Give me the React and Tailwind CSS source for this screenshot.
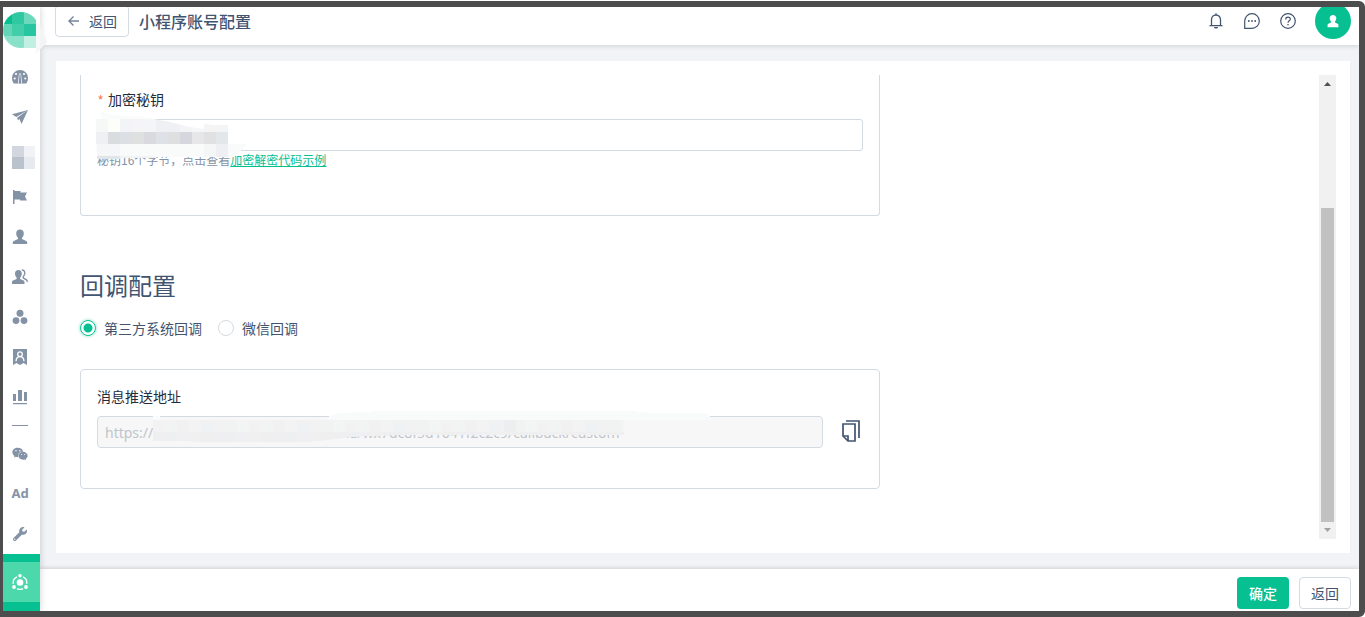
import { useState } from 'react';
import { FaWeixin, FaWrench } from 'react-icons/fa';

function Svg({ children, className = 'size-4', viewBox = '0 0 16 16' }) {
  return (
    <svg className={className} viewBox={viewBox} fill="currentColor" aria-hidden="true">
      {children}
    </svg>
  );
}

const person = 'M8 0.5c2.300 0 3.800 1.600 3.800 3.800 0 2.100-.7 3.500-1.800 4.500v1.300l4.200 1.800c.8.400 1 1 1 1.800v1.300H.8v-1.300c0-.8.2-1.400 1-1.800L6 10.100V8.800C4.900 7.800 4.200 6.400 4.200 4.300 4.200 2.100 5.700.5 8 .5z';

const navItems = [
  {
    label: '仪表盘',
    icon: (
      <Svg>
        <path d="M0 9a8 8 0 0 1 16 0c0 2.200-.6 4-1.700 5.500H1.700A8.500 8.500 0 0 1 0 9z" />
        <g fill="#fff">
          <path d="M7 4.500h2l.8 7.500v2.500H6.200V12z" />
          <circle cx="4" cy="5" r="1.100" />
          <circle cx="12" cy="5" r="1.100" />
          <circle cx="2.700" cy="9.500" r="1.100" />
          <circle cx="13.300" cy="9.500" r="1.100" />
        </g>
        <path d="M7.500 5h1l.6 7.500v2H6.900v-2z" />
      </Svg>
    ),
  },
  {
    label: '推送',
    icon: (
      <Svg>
        <path d="M16 1 0 5.200l4.300 2.900zM16 1 5.200 8.800l.6 2.500 1.700-1.200 2 5z" />
      </Svg>
    ),
  },
  {
    label: '应用',
    icon: (
      <svg className="ml-1.5 h-[23px] w-[23px]" viewBox="0 0 23 23" shapeRendering="crispEdges" aria-hidden="true">
        <rect width="12" height="11" fill="#d2d7df" />
        <rect x="12" width="11" height="11" fill="#f1f2f5" />
        <rect y="11" width="12" height="12" fill="#bac2cd" />
        <rect x="12" y="11" width="11" height="12" fill="#e7eaee" />
      </svg>
    ),
  },
  {
    label: '活动',
    icon: (
      <Svg>
        <path d="M1 1h1.500v1H8.500v1.500H15L13 7.500l2 4H8V10.500H2.500V15H1z" />
      </Svg>
    ),
  },
  { label: '用户', icon: <Svg><path d={person} /></Svg> },
  {
    label: '用户组',
    icon: (
      <Svg>
        <path d="M6.400 1c2.100 0 3.400 1.500 3.400 3.500 0 1.800-.6 3-1.600 4V10l3.300 1.600c.8.400 1 1 1 1.700V15H0v-1.700c0-.7.2-1.300 1-1.700L4.600 10V8.500C3.600 7.500 3 6.300 3 4.500 3 2.500 4.300 1 6.400 1z" />
        <path d="M9.800.9c2.100.2 3.100 1.600 3 3.400-.1 1.600-.7 2.500-1.600 3.500v1l3.200 2 1.300 2" fill="none" stroke="currentColor" strokeWidth="1.400" />
      </Svg>
    ),
  },
  {
    label: '分组',
    icon: (
      <Svg>
        <circle cx="8" cy="4.300" r="3.500" />
        <circle cx="4" cy="11.600" r="3.400" />
        <circle cx="12" cy="11.600" r="3.400" />
      </Svg>
    ),
  },
  {
    label: '会员',
    icon: (
      <Svg>
        <path d="M1 0h14v16l-3.500-2L8 16l-3.500-2L1 16z" />
        <g fill="none" stroke="#fff" strokeWidth="1.300">
          <circle cx="8" cy="5.200" r="2.300" />
          <path d="M4 12.200c.2-3 1.700-4.500 4-4.500s3.800 1.500 4 4.500" />
        </g>
      </Svg>
    ),
  },
  {
    label: '统计',
    icon: (
      <Svg>
        <path d="M1 5h3v7H1zM6 1h4v11H6zM12 3h3v9h-3zM1 14h14v1.200H1z" />
      </Svg>
    ),
  },
];

const toolItems = [
  { label: '微信', icon: <FaWeixin className="size-4" /> },
  { label: 'Ad', icon: <span className="font-['Noto_Sans'] text-[13px] font-bold">Ad</span> },
  { label: '工具', icon: <FaWrench className="size-[14px]" /> },
];

function Logo() {
  return (
    <svg className="relative z-20 h-[50px] w-[45px] shrink-0" viewBox="3 7 45 50" shapeRendering="crispEdges" aria-hidden="true">
      <defs>
        <clipPath id="logo-round">
          <circle cx="21" cy="30" r="18" />
        </clipPath>
      </defs>
      <path d="M36 22l4 3 7 17-11 11z" fill="#f3f4f5" />
      <path d="M36 22l4 3v24l-4 3z" fill="#f7f8f8" />
      <g clipPath="url(#logo-round)">
        <rect x="0" y="12" width="12" height="12" fill="#08bf90" />
        <rect x="12" y="12" width="12" height="12" fill="#30c8a0" />
        <rect x="24" y="12" width="12" height="12" fill="#6cd9bd" />
        <rect x="0" y="24" width="12" height="12" fill="#62d6b7" />
        <rect x="12" y="24" width="12" height="12" fill="#41cea9" />
        <rect x="24" y="24" width="12" height="12" fill="#27c6a0" />
        <rect x="0" y="36" width="24" height="12" fill="#8ae1ca" />
      </g>
      <rect x="24" y="36" width="12" height="12" fill="#c1efe2" />
    </svg>
  );
}

function Sidebar() {
  return (
    <aside className="relative z-20 flex w-[37px] shrink-0 flex-col bg-white text-[#8492a6] shadow-[1px_0_6px_rgba(0,0,0,0.15)]">
      <Logo />
      <nav className="flex flex-1 flex-col">
        {navItems.map((item) => (
          <a key={item.label} href="#" aria-label={item.label} className="flex h-10 items-center justify-center pr-[3px]">
            {item.icon}
          </a>
        ))}
        <div className="flex h-[17px] items-center justify-center pr-[3px]">
          <span className="h-px w-4 bg-[#8492a6]" />
        </div>
        {toolItems.map((item) => (
          <a key={item.label} href="#" aria-label={item.label} className="flex h-10 items-center justify-center pr-[3px]">
            {item.icon}
          </a>
        ))}
        <a href="#" aria-label="设置" className="flex-1 bg-[#07c091] pt-2 text-white">
          <span className="flex h-10 items-center justify-center bg-[#4dd8ab] pr-[3px]">
            <Svg>
              <circle cx="8" cy="8.500" r="3.300" />
              <circle cx="8" cy="1.800" r="1.800" />
              <circle cx="2" cy="13" r="1.900" />
              <circle cx="14" cy="13" r="1.900" />
              <path d="M5 2.900A6.600 6.600 0 0 0 1.300 9.800M11 2.900a6.600 6.600 0 0 1 3.700 6.900M5 14.700a7 7 0 0 0 6 0" fill="none" stroke="currentColor" strokeWidth="1.300" />
            </Svg>
          </span>
        </a>
      </nav>
    </aside>
  );
}

function Header() {
  return (
    <header className="relative z-10 flex h-[38px] shrink-0 items-center overflow-hidden bg-white pr-2 pb-[10px] pl-[15px] text-[#425470] shadow-[0_1px_5px_rgba(0,0,0,0.15)]">
      <button type="button" className="flex h-8 shrink-0 items-center gap-2 rounded border border-[#d3dae2] px-[11px] text-sm">
        <svg className="h-3.5 w-3.5" viewBox="0 0 14 14" fill="none" stroke="#75849a" strokeWidth="1.400" aria-hidden="true">
          <path d="M12 7H2M6.500 2.500 2 7l4.500 4.500" />
        </svg>
        返回
      </button>
      <h1 className="ml-2.5 flex-1 text-base font-medium">小程序账号配置</h1>
      <div className="flex items-center gap-5">
        <button type="button" aria-label="通知">
          <Svg>
            <path d="M3.500 12.200V6.500a4.500 4.500 0 0 1 9 0v5.700M1.500 12.700h13M8 .3v1.700" fill="none" stroke="currentColor" strokeWidth="1.300" />
            <path d="M5.900 14h4.200c-.3 1.100-1 1.600-2.100 1.600S6.200 15.100 5.900 14z" />
          </Svg>
        </button>
        <button type="button" aria-label="消息">
          <Svg>
            <path d="M.7 15.300V8A7.300 7.300 0 1 1 8 15.300z" fill="none" stroke="currentColor" strokeWidth="1.200" />
            <circle cx="4.800" cy="8" r=".9" />
            <circle cx="8" cy="8" r=".9" />
            <circle cx="11.200" cy="8" r=".9" />
          </Svg>
        </button>
        <button type="button" aria-label="帮助">
          <Svg>
            <circle cx="8" cy="8" r="7.300" fill="none" stroke="currentColor" strokeWidth="1.200" />
            <path d="M5.700 6.400c0-1.400.9-2.200 2.300-2.200s2.300.8 2.300 2c0 1.600-2.300 1.700-2.300 3.600" fill="none" stroke="currentColor" strokeWidth="1.200" />
            <circle cx="8" cy="11.700" r=".8" />
          </Svg>
        </button>
        <button type="button" aria-label="账户" className="-ml-[1px] flex size-9 shrink-0 items-center justify-center rounded-full bg-[#07c091] text-white">
          <Svg className="size-3.5">
            <path d="M8 1c2.200 0 3.800 1.500 3.800 3.700 0 1.700-.7 3-1.500 3.900v1.200l3 1.300c.7.400.9.900.9 1.600V15H1.800v-2.300c0-.7.2-1.200.9-1.600l3-1.300V8.600c-.8-.9-1.500-2.200-1.500-3.900C4.200 2.500 5.800 1 8 1z" />
          </Svg>
        </button>
      </div>
    </header>
  );
}

const keyRowA = ['#f6f7f7', '#fdfdfa', '#f3f4f7', '#f5f5f7', '#f4f5f6', '#eff0f4', '#eff0f3', '#f3f4f6', '#f5f6f7', '#f4f4f5', '#f3f4f5'];
const keyRowB = ['#eff0f2', '#d9dde0', '#dce0e4', '#dfe1e0', '#dad9df', '#dee1e8', '#dddfe0', '#d4d8de', '#e7e6e8', '#e0e1e3', '#e4e7e9'];

function KeyMosaic() {
  return (
    <svg className="pointer-events-none absolute -top-2 -left-px h-12 w-[152px]" viewBox="96 111 152 48" shapeRendering="crispEdges" aria-hidden="true">
      <defs>
        <clipPath id="key-top">
          <path d="M96 119h58l16 3 20 5 14 2v-5l9 1h15v8H96z" />
        </clipPath>
      </defs>
      <path d="M101 111l11 4 35 2 7 2v3H96v-3h5z" fill="#fafbfb" />
      <g clipPath="url(#key-top)">
        {keyRowA.map((c, i) => (
          <rect key={i} x={96 + i * 12} y="119" width="12" height="13" fill={c} />
        ))}
      </g>
      {keyRowB.map((c, i) => (
        <rect key={i} x={96 + i * 12} y="132" width="12" height="12" fill={c} />
      ))}
      <path d="M96 144h152l-14 13H97z" fill="#f9fbfb" />
      <rect x="97" y="144" width="23" height="13" fill="#f5f6f7" />
      <rect x="204" y="144" width="12" height="13" fill="#f5f6f7" />
      <rect x="216" y="144" width="12" height="13" fill="#eeeff2" />
      <rect x="97" y="156" width="23" height="3" fill="#e1e4e8" />
      <rect x="120" y="156" width="35" height="2" fill="#f0f2f4" />
    </svg>
  );
}

const urlTones = ['#f2f2f3', '#f3f3f3', '#f1f2f2', '#f2f3f3', '#f0f1f2', '#f3f4f4', '#f1f1f2', '#f2f2f2'];
const urlLowTones = ['#efeff1', '#f0f0f1', '#eeeff1', '#efeff0', '#f0f0f2'];

function UrlMosaic() {
  return (
    <svg className="pointer-events-none absolute -top-1.5 left-14 h-9 w-[558px]" viewBox="153 410 558 36" shapeRendering="crispEdges" aria-hidden="true">
      <defs>
        <clipPath id="url-shape">
          <path d="M153 420h471v15H400l-25 1-23 1-17 2-17 2-8 1H199l-12-1h-34z" />
        </clipPath>
      </defs>
      <path d="M153 416h7v4h-7z" fill="#fafbfb" />
      <path d="M327 417l12-4 45-2h248l20 2h52l6 3v4H327z" fill="#f9fbfa" />
      <g clipPath="url(#url-shape)">
        {Array.from({ length: 40 }, (_, i) => (
          <g key={i}>
            <rect x={153 + i * 12} y="420" width="12" height="12" fill={urlTones[(i * 3) % 8]} />
            <rect x={153 + i * 12} y="432" width="12" height="12" fill={urlLowTones[(i * 2) % 5]} />
          </g>
        ))}
        <rect x="504" y="420" width="12" height="12" fill="#edeef0" />
      </g>
    </svg>
  );
}

function Radio({ label, value, current, onChange }) {
  return (
    <label className="flex items-center gap-2">
      <input
        type="radio"
        name="callback"
        value={value}
        checked={current === value}
        onChange={() => onChange(value)}
        className="size-4 appearance-none rounded-full border border-[#d3dae2] bg-white checked:border-[#07c091] checked:bg-[radial-gradient(circle,#07c091_4px,#fff_5px)] checked:shadow-[0_0_0_2px_#dcf6ef]"
      />
      {label}
    </label>
  );
}

function ScrollTrack() {
  return (
    <div className="flex w-[17px] shrink-0 flex-col items-center bg-[#f1f1f1]" aria-hidden="true">
      <svg className="h-[17px] w-[17px] shrink-0" viewBox="0 0 17 17"><path d="M5 11l3.500-4 3.500 4z" fill="#505050" /></svg>
      <div className="grow-[116]" />
      <div className="w-[13px] grow-[314] bg-[#c1c1c1]" />
      <svg className="h-[17px] w-[17px] shrink-0" viewBox="0 0 17 17"><path d="M5 6l3.500 4L12 6z" fill="#a3a3a3" /></svg>
    </div>
  );
}

function SettingsForm() {
  const [callback, setCallback] = useState('third');
  return (
    <div className="min-w-0 flex-1 overflow-hidden pl-6 text-sm leading-5 text-[#425470]">
      <section className="max-w-[800px] rounded-b-sm border border-t-0 border-[#d3dae2] px-4 pt-[14px] pb-[46px]">
        <label htmlFor="secret" className="flex gap-1 text-[#1f2d3d]">
          <span className="w-[7px] font-['Liberation_Mono'] text-xs leading-6 text-[#f5622d]">*</span>
          <span>加密秘钥</span>
        </label>
        <div className="relative mt-1.5">
          <input id="secret" type="text" defaultValue="" className="block h-8 w-full rounded-[3px] border border-[#d3dae2] px-2" />
          <p className="text-xs leading-[18px] text-[#8492a6]">
            秘钥16个字节，点击查看
            <a href="#" className="text-[#07c091] underline">加密解密代码示例</a>
          </p>
          <KeyMosaic />
        </div>
      </section>

      <h2 className="mt-[53px] text-2xl leading-8">回调配置</h2>
      <div className="mt-[17px] flex gap-4">
        <Radio label="第三方系统回调" value="third" current={callback} onChange={setCallback} />
        <Radio label="微信回调" value="wechat" current={callback} onChange={setCallback} />
      </div>

      <section className="mt-[31px] max-w-[800px] rounded-sm border border-[#d3dae2] px-4 pt-4 pb-10">
        <label htmlFor="push-url" className="block text-[#1f2d3d]">消息推送地址</label>
        <div className="mt-2.5 flex items-center gap-4">
          <div className="relative min-w-0 flex-1">
            <input
              id="push-url"
              type="text"
              disabled
              value="https://e-----------------------------------/mina/wx7dc8f5d1041f2c2c9/callback/custom"
              className="block h-8 w-full rounded border border-[#d3dae2] bg-[#f7f7f7] px-[7px] font-['Noto_Sans'] text-[#c0c4cc]"
            />
            <UrlMosaic />
          </div>
          <button type="button" aria-label="复制" className="flex w-6 justify-center pb-0.5">
            <svg className="h-[22px] w-[18px]" viewBox="0 0 18 22" fill="none" stroke="#425470" strokeWidth="1.700" aria-hidden="true">
              <path d="M1 4h12v17H6l-5-5z" />
              <path d="M1 16h5v5M4 1h13v17" />
            </svg>
          </button>
        </div>
      </section>
    </div>
  );
}

export default function App() {
  return (
    <div className="h-screen pt-px font-['Noto_Sans_CJK_SC',sans-serif]">
      <div className="flex h-full overflow-hidden rounded-r-md border-t-6 border-r-6 border-b-6 border-l-3 border-[#4d4d4d] bg-white">
        <Sidebar />
        <div className="flex min-w-0 flex-1 flex-col bg-[#f2f3f7]">
          <Header />
          <main className="flex min-h-0 flex-1 py-4 pr-[9px] pl-4">
            <div className="flex min-w-0 flex-1 bg-white py-[14px] pr-[14px]">
              <SettingsForm />
              <ScrollTrack />
            </div>
          </main>
          <footer className="z-10 flex h-[42px] shrink-0 items-center justify-end gap-2.5 bg-white px-2 pt-1.5 text-sm shadow-[0_-1px_4px_rgba(0,0,0,0.15)]">
            <button type="button" className="h-8 w-[52px] rounded bg-[#07c091] font-medium text-white">确定</button>
            <button type="button" className="h-8 w-[52px] rounded border border-[#d3dae2] text-[#425470]">返回</button>
          </footer>
        </div>
      </div>
    </div>
  );
}
